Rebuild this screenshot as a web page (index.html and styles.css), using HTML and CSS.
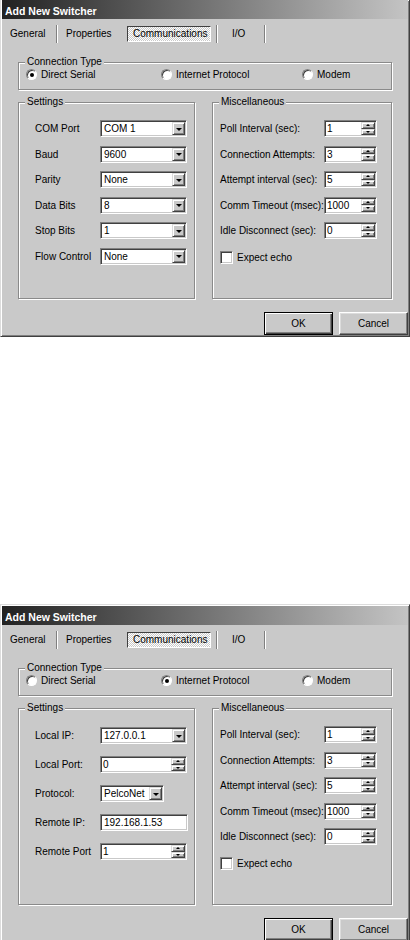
FILE: index.html
```html
<!DOCTYPE html>
<html lang="en">
<head>
    <meta charset="UTF-8">
    <meta name="viewport" content="width=device-width, initial-scale=1.0">
    <title>Add New Switcher</title>
    <link rel="stylesheet" href="styles.css">
</head>
<body>
    <!-- Serial connection -->
    <div class="dialog cropped">
        <div class="titlebar">Add New Switcher</div>
        <div class="tabs">
            <span class="tab tab-general">General</span>
            <span class="sep"></span>
            <span class="tab tab-props">Properties</span>
            <span class="tab tab-comm">Communications</span>
            <span class="sep"></span>
            <span class="tab tab-io">I/O</span>
            <span class="sep"></span>
        </div>
        <div class="content">
            <div class="group conn">
                <span class="legend">Connection Type</span>
                <div class="radios">
                    <label class="radio checked"><span class="dot"></span>Direct Serial</label>
                    <label class="radio"><span class="dot"></span>Internet Protocol</label>
                    <label class="radio"><span class="dot"></span>Modem</label>
                </div>
            </div>
            <div class="columns">
                <div class="group settings">
                    <span class="legend">Settings</span>
                    <div class="form serial">
                        <span>COM Port</span>
                        <span class="combo"><span class="value">COM 1</span><span class="drop"></span></span>
                        <span>Baud</span>
                        <span class="combo"><span class="value">9600</span><span class="drop"></span></span>
                        <span>Parity</span>
                        <span class="combo"><span class="value">None</span><span class="drop"></span></span>
                        <span>Data Bits</span>
                        <span class="combo"><span class="value">8</span><span class="drop"></span></span>
                        <span>Stop Bits</span>
                        <span class="combo"><span class="value">1</span><span class="drop"></span></span>
                        <span>Flow Control</span>
                        <span class="combo"><span class="value">None</span><span class="drop"></span></span>
                    </div>
                </div>
                <div class="group misc">
                    <span class="legend">Miscellaneous</span>
                    <div class="form misc-form">
                        <span>Poll Interval (sec):</span>
                        <span class="spin"><span class="value">1</span><span class="updown"><span class="up"></span><span class="down"></span></span></span>
                        <span>Connection Attempts:</span>
                        <span class="spin"><span class="value">3</span><span class="updown"><span class="up"></span><span class="down"></span></span></span>
                        <span>Attempt interval (sec):</span>
                        <span class="spin"><span class="value">5</span><span class="updown"><span class="up"></span><span class="down"></span></span></span>
                        <span>Comm Timeout (msec):</span>
                        <span class="spin"><span class="value">1000</span><span class="updown"><span class="up"></span><span class="down"></span></span></span>
                        <span>Idle Disconnect (sec):</span>
                        <span class="spin"><span class="value">0</span><span class="updown"><span class="up"></span><span class="down"></span></span></span>
                        <label class="check"><span class="box"></span>Expect echo</label>
                    </div>
                </div>
            </div>
        </div>
        <div class="buttons">
            <button class="btn default">OK</button>
            <button class="btn">Cancel</button>
        </div>
    </div>

    <!-- Internet protocol connection -->
    <div class="dialog second">
        <div class="titlebar">Add New Switcher</div>
        <div class="tabs">
            <span class="tab tab-general">General</span>
            <span class="sep"></span>
            <span class="tab tab-props">Properties</span>
            <span class="tab tab-comm">Communications</span>
            <span class="sep"></span>
            <span class="tab tab-io">I/O</span>
            <span class="sep"></span>
        </div>
        <div class="content">
            <div class="group conn">
                <span class="legend">Connection Type</span>
                <div class="radios">
                    <label class="radio"><span class="dot"></span>Direct Serial</label>
                    <label class="radio checked"><span class="dot"></span>Internet Protocol</label>
                    <label class="radio"><span class="dot"></span>Modem</label>
                </div>
            </div>
            <div class="columns">
                <div class="group settings">
                    <span class="legend">Settings</span>
                    <div class="form ip">
                        <span>Local IP:</span>
                        <span class="combo"><span class="value">127.0.0.1</span><span class="drop"></span></span>
                        <span>Local Port:</span>
                        <span class="spin wide"><span class="value">0</span><span class="updown"><span class="up"></span><span class="down"></span></span></span>
                        <span>Protocol:</span>
                        <span class="combo short"><span class="value">PelcoNet</span><span class="drop"></span></span>
                        <span>Remote IP:</span>
                        <span class="textbox">192.168.1.53</span>
                        <span>Remote Port</span>
                        <span class="spin wide"><span class="value">1</span><span class="updown"><span class="up"></span><span class="down"></span></span></span>
                    </div>
                </div>
                <div class="group misc">
                    <span class="legend">Miscellaneous</span>
                    <div class="form misc-form">
                        <span>Poll Interval (sec):</span>
                        <span class="spin"><span class="value">1</span><span class="updown"><span class="up"></span><span class="down"></span></span></span>
                        <span>Connection Attempts:</span>
                        <span class="spin"><span class="value">3</span><span class="updown"><span class="up"></span><span class="down"></span></span></span>
                        <span>Attempt interval (sec):</span>
                        <span class="spin"><span class="value">5</span><span class="updown"><span class="up"></span><span class="down"></span></span></span>
                        <span>Comm Timeout (msec):</span>
                        <span class="spin"><span class="value">1000</span><span class="updown"><span class="up"></span><span class="down"></span></span></span>
                        <span>Idle Disconnect (sec):</span>
                        <span class="spin"><span class="value">0</span><span class="updown"><span class="up"></span><span class="down"></span></span></span>
                        <label class="check"><span class="box"></span>Expect echo</label>
                    </div>
                </div>
            </div>
        </div>
        <div class="buttons">
            <button class="btn default">OK</button>
            <button class="btn">Cancel</button>
        </div>
    </div>
</body>
</html>
```

FILE: styles.css
```css
html, body {
    margin: 0;
    padding: 0;
    height: 940px;
    overflow: hidden;
    background-color: #fff;
}
body {
    font-family: "Liberation Sans", Arial, sans-serif;
    font-size: 10px;
    color: #000;
}
.dialog {
    width: 410px;
    box-sizing: border-box;
    background-color: #c9c9c9;
    border: 1px solid;
    border-color: #dcdcdc #404040 #404040 #dcdcdc;
    padding: 1px;
    box-shadow: inset 1px 1px #fff, inset -1px -1px #808080;
}
.dialog.cropped {
    border-top: none;
    padding-top: 0;
}
.dialog.second {
    margin-top: 267px;
}
.titlebar {
    height: 19px;
    box-sizing: border-box;
    padding: 4px 0 0 3px;
    line-height: 15px;
    font-size: 10.5px;
    font-weight: bold;
    color: #fff;
    background: linear-gradient(to right, #222, #c4c4c4);
}
.tabs {
    display: flex;
    height: 19px;
    margin-top: 5px;
    padding-left: 8px;
}
.tab {
    line-height: 19px;
    box-sizing: border-box;
}
.tab-general {
    width: 46px;
}
.tab-props {
    width: 61px;
    padding-left: 8px;
}
.tab-comm {
    width: 84px;
    height: 16px;
    margin: 2px 5px 0 8px;
    padding-left: 5px;
    line-height: 14px;
    border: 1px solid;
    border-color: #404040 #fff #fff #404040;
    background: repeating-conic-gradient(#fff 0 25%, #c9c9c9 0 50%) 0 0 / 2px 2px;
}
.tab-io {
    width: 46px;
    padding-left: 14px;
}
.sep {
    height: 18px;
    margin-top: 1px;
    border-left: 1px solid #808080;
    border-right: 1px solid #fff;
}
.content {
    padding: 0 16px;
}
.group {
    box-sizing: border-box;
    border: 1px solid #8a8a8a;
    box-shadow: inset 1px 1px #fff, 1px 1px #fff;
}
.legend {
    display: block;
    width: fit-content;
    height: 12px;
    line-height: 12px;
    margin: -7px 0 0 6px;
    padding: 0 2px;
    background-color: #c9c9c9;
}
.conn {
    margin-top: 19px;
    height: 28px;
}
.radios {
    display: grid;
    grid-template-columns: 135px 141px auto;
    height: 13px;
    padding-left: 7px;
    align-items: center;
}
.radio {
    display: flex;
    align-items: center;
    gap: 4px;
}
.dot {
    width: 11px;
    height: 11px;
    box-sizing: border-box;
    border-radius: 50%;
    border: 1px solid;
    border-color: #808080 #fff #fff #808080;
    background-color: #fff;
    box-shadow: inset 1px 1px #404040;
    display: flex;
    align-items: center;
    justify-content: center;
}
.radio.checked .dot::after {
    content: "";
    width: 4px;
    height: 4px;
    border-radius: 50%;
    background-color: #000;
}
.columns {
    display: grid;
    grid-template-columns: 177px 180px;
    column-gap: 17px;
    margin-top: 12px;
}
.settings, .misc {
    height: 197px;
}
.form {
    display: grid;
    align-items: center;
    justify-items: start;
    margin-top: 12px;
}
.serial {
    grid-template-columns: 65px auto;
    row-gap: 8.5px;
    padding-left: 16px;
}
.ip {
    grid-template-columns: 65px auto;
    row-gap: 12px;
    margin-top: 13px;
    padding-left: 16px;
}
.misc-form {
    grid-template-columns: 104px auto;
    row-gap: 8.5px;
    padding-left: 7px;
}
.combo, .spin, .textbox, .box {
    box-sizing: border-box;
    background-color: #fff;
    border: 1px solid;
    border-color: #808080 #fff #fff #808080;
    box-shadow: inset 1px 1px #404040, inset -1px -1px #c9c9c9;
    padding: 1px;
}
.combo, .spin {
    display: flex;
    height: 17px;
}
.combo {
    width: 87px;
}
.combo.short {
    width: 64px;
}
.spin {
    width: 53px;
}
.spin.wide {
    width: 87px;
}
.textbox {
    width: 88px;
    height: 17px;
    line-height: 13px;
    padding-left: 3px;
}
.value {
    flex: 1;
    line-height: 13px;
    padding-left: 2px;
}
.spin .value {
    padding-left: 1px;
}
.drop, .up, .down {
    box-sizing: border-box;
    background-color: #c9c9c9;
    border: 1px solid;
    border-color: #dcdcdc #404040 #404040 #dcdcdc;
    box-shadow: inset 1px 1px #fff, inset -1px -1px #808080;
    display: flex;
    align-items: center;
    justify-content: center;
}
.drop {
    width: 13px;
}
.drop::after {
    content: "";
    border-left: 3px solid transparent;
    border-right: 3px solid transparent;
    border-top: 3px solid #000;
    margin-top: 1px;
}
.updown {
    display: flex;
    flex-direction: column;
    width: 14px;
}
.up, .down {
    flex: 1;
}
.up::after {
    content: "";
    border-left: 2px solid transparent;
    border-right: 2px solid transparent;
    border-bottom: 2px solid #000;
}
.down::after {
    content: "";
    border-left: 2px solid transparent;
    border-right: 2px solid transparent;
    border-top: 2px solid #000;
}
.check {
    grid-column: 1 / -1;
    display: flex;
    align-items: center;
    gap: 4px;
    margin-top: 3px;
}
.box {
    width: 13px;
    height: 13px;
}
.buttons {
    display: flex;
    justify-content: flex-end;
    gap: 6px;
    margin-top: 13px;
}
.btn {
    width: 69px;
    height: 23px;
    padding: 0;
    font-family: inherit;
    font-size: 10px;
    color: #000;
    background-color: #c9c9c9;
    border: 1px solid;
    border-color: #fff #404040 #404040 #fff;
    box-shadow: inset -1px -1px #808080, inset 1px 1px #dcdcdc;
}
.btn.default {
    border-color: #000;
    box-shadow: inset 1px 1px #fff, inset -1px -1px #404040, inset -2px -2px #808080;
}
```
